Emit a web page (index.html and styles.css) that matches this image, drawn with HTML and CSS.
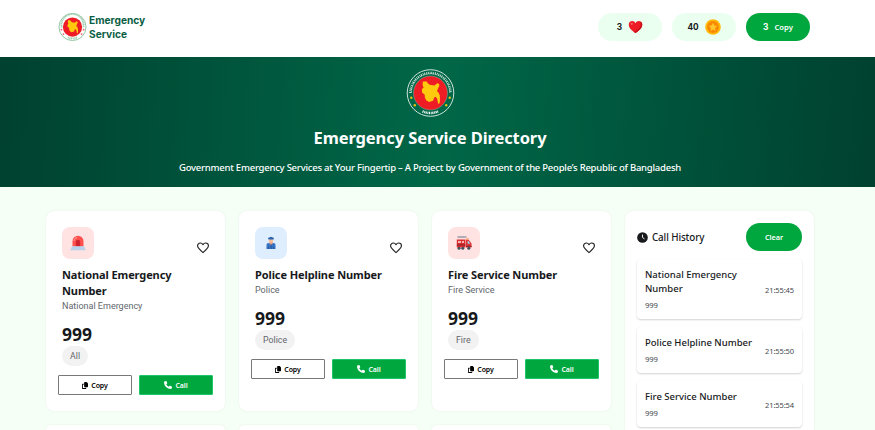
FILE: index.html
```html
<!DOCTYPE html>
<html lang="en">
<head>
<meta charset="utf-8">
<title>Emergency Service Directory</title>
<link rel="stylesheet" href="styles.css">
</head>
<body>
<svg class="defs" width="0" height="0" aria-hidden="true">
  <symbol id="map" viewBox="0 0 48 48">
    <path d="M16.300 12.500h4l.8 1.500 2 1.700 4.900.8 2.600-2.300 2 .6.300 2-2 4.200-.2 1.700 1.300.8 1.300 3 .2 5.500-.7 2.800-1.300-.3-.8-4.800-1.700-2-1.500 1-.8 3-4.200 1.300-2.800-1.700-1.300-2.600-.3-3.300-2.600-2-.1-3.400 1.700-1.300-1-2.800z" fill="#ffc90e"/>
  </symbol>
  <symbol id="heart" viewBox="0 0 16 16">
    <path d="M8 13.300C3.800 9.800 1.800 8 1.800 5.500A3.200 3.200 0 0 1 5 2.300c1.300 0 2.300.7 3 1.900.7-1.200 1.700-1.900 3-1.900a3.200 3.200 0 0 1 3.200 3.200c0 2.500-2 4.300-6.200 7.800z" fill="none" stroke="#202020" stroke-width="1.300" stroke-linejoin="round"/>
  </symbol>
  <symbol id="copy" viewBox="0 0 448 512">
    <path d="M208 0h124c13 0 25 5 34 14l68 68c9 9 14 21 14 34v220c0 27-21 48-48 48H208c-27 0-48-21-48-48V48c0-27 21-48 48-48zM48 128h80v64H64v256h192v-32h64v48c0 27-21 48-48 48H48c-27 0-48-21-48-48V176c0-27 21-48 48-48z"/>
  </symbol>
  <symbol id="phone" viewBox="0 0 512 512">
    <path d="M164.900 24.600c-7.700-18.600-28-28.500-47.400-23.200l-88 24C12.100 30.200 0 46 0 64c0 247.400 200.600 448 448 448 18 0 33.800-12.100 38.600-29.500l24-88c5.300-19.400-4.600-39.700-23.200-47.400l-96-40c-16.300-6.800-35.200-2.100-46.300 11.600L304.700 368C234.300 334.700 177.300 277.700 144 207.300L193.300 167c13.700-11.200 18.400-30 11.600-46.300z" fill="#fff"/>
  </symbol>
</svg>

<header class="navbar">
  <div class="brand">
    <svg class="brand-logo" viewBox="0 0 48 48">
      <circle cx="24" cy="24" r="23.200" fill="#fff" stroke="#83bd96" stroke-width="1.500"/>
      <path d="M5.500 25A19 19 0 1 1 42.500 25M16 41.800A19.500 19.500 0 0 0 32 41.800" fill="none" stroke="#a3cfb0" stroke-width="3.200" stroke-dasharray="2 .8"/>
      <circle cx="24" cy="24" r="16.500" fill="#ee1c25"/>
      <g fill="#ee5b62"><circle cx="5" cy="28.500" r="1.500"/><circle cx="8.500" cy="36" r="1.500"/><circle cx="43" cy="28.500" r="1.500"/><circle cx="39.500" cy="36" r="1.500"/></g>
      <use href="#map"/>
    </svg>
    <div class="brand-name">Emergency<br>Service</div>
  </div>
  <div class="counters">
    <div class="pill"><span>3</span>
      <svg class="pill-heart" viewBox="0 0 16 14"><path d="M8 13.500C3 10 .8 7.500.8 4.300.8 2 2.500.6 4.400.6 6 .6 7.300 1.500 8 3 8.700 1.500 10 .6 11.600.6c1.900 0 3.600 1.400 3.600 3.700 0 3.200-2.200 5.700-7.200 9.200z" fill="#ee1c25"/><path d="M8 13.500c5-3.500 7.200-6 7.200-9.200 0-1.500-.7-2.600-1.700-3.200.5 4.900-1.500 8.400-7.200 11.100z" fill="#c9111d"/><circle cx="4" cy="3.600" r="1.200" fill="#f8656b"/></svg>
    </div>
    <div class="pill"><span>40</span>
      <svg class="pill-coin" viewBox="0 0 16 16"><circle cx="8" cy="8" r="7.800" fill="#ffb90a"/><circle cx="8" cy="8" r="5.900" fill="#f98700"/><path d="M8 3.700l1.300 2.700 3 .4-2.200 2.100.5 3L8 10.500l-2.600 1.400.5-3-2.200-2.100 3-.4z" fill="#ffc72d"/></svg>
    </div>
    <button class="pill pill-green"><span>3</span> <b>Copy</b></button>
  </div>
</header>

<section class="hero">
  <svg class="hero-logo" viewBox="0 0 48 48">
    <circle cx="24" cy="24" r="23.300" fill="#006747" stroke="#e5f1eb" stroke-width=".9"/>
    <path d="M4.800 24A19.200 19.200 0 0 1 43.200 24" fill="none" stroke="#cfe3da" stroke-width=".7" stroke-dasharray="2.600 .5"/>
    <path d="M3.800 24A20.200 20.200 0 0 1 44.200 24" fill="none" stroke="#dcece5" stroke-width="2.200" stroke-dasharray=".9 1.100 .7 .9"/>
    <path d="M16 42.300A20 20 0 0 0 32 42.300" fill="none" stroke="#fff" stroke-width="2.400" stroke-dasharray="1.200 .7 .8 .6"/>
    <circle cx="24" cy="24" r="17" fill="#ee1c25" stroke="#7fb39f" stroke-width=".5"/>
    <g fill="#e6c414"><circle cx="4.800" cy="28.800" r="1.200"/><circle cx="8.300" cy="36.300" r="1.200"/><circle cx="43.200" cy="28.800" r="1.200"/><circle cx="39.700" cy="36.300" r="1.200"/></g>
    <use href="#map"/>
  </svg>
  <h1>Emergency Service Directory</h1>
  <p>Government Emergency Services at Your Fingertip – A Project by Government of the People’s Republic of Bangladesh</p>
</section>

<main class="layout">
  <article class="card">
    <div class="card-top">
      <div class="tile tile-red"><svg viewBox="0 0 16 16"><path d="M2.500 11.500V6.200a5.500 5.500 0 0 1 11 0v5.300z" fill="#ff514e"/><path d="M5.800 11.500V7a2.200 2.200 0 0 1 4.400 0v4.500z" fill="#cf2430"/><path d="M4 6a4 4 0 0 1 3-3.500" fill="none" stroke="#ff8b83" stroke-width="1.200"/><path d="M2 11.300h12l1.600 4H.4z" fill="#b9d1eb"/></svg></div>
      <svg class="fav"><use href="#heart"/></svg>
    </div>
    <h2>National Emergency Number</h2>
    <div class="sub">National Emergency</div>
    <div class="number">999</div>
    <span class="tag">All</span>
    <div class="actions">
      <button class="btn"><svg class="i-copy"><use href="#copy"/></svg>Copy</button>
      <button class="btn btn-call"><svg class="i-phone"><use href="#phone"/></svg>Call</button>
    </div>
  </article>
  <article class="card">
    <div class="card-top">
      <div class="tile tile-blue"><svg viewBox="0 0 16 16"><path d="M3.500 14V9.800Q3.500 8 5.500 8h5q2 0 2 1.800V14z" fill="#3975c4"/><path d="M6.300 7h3.400v1.500L8 10 6.300 8.500z" fill="#e9a17e"/><circle cx="8" cy="5.600" r="2.200" fill="#f6bd9b"/><path d="M5.500 4.600L5 3l3-1.200L11 3l-.5 1.600z" fill="#2763ae"/><path d="M8 9.500V14M5.400 11.500V14m5.200-2.500V14" stroke="#234f8e" stroke-width=".8"/></svg></div>
      <svg class="fav"><use href="#heart"/></svg>
    </div>
    <h2>Police Helpline Number</h2>
    <div class="sub">Police</div>
    <div class="number">999</div>
    <span class="tag">Police</span>
    <div class="actions">
      <button class="btn"><svg class="i-copy"><use href="#copy"/></svg>Copy</button>
      <button class="btn btn-call"><svg class="i-phone"><use href="#phone"/></svg>Call</button>
    </div>
  </article>
  <article class="card">
    <div class="card-top">
      <div class="tile tile-red"><svg viewBox="0 0 16 16"><path d="M1.500 2h9" stroke="#77818e" stroke-width="1.100"/><path d="M.8 4.500h8.700v8H.8z" fill="#dc2b2d"/><path d="M10 4.500h2.500l3 4v4H10z" fill="#e23434"/><path d="M11.600 6h1l1.700 2.700h-2.700z" fill="#8fd0ea"/><path d="M2 6h3v2H2zm4 0h2v2H6z" fill="#f3b7b4"/><path d="M.8 10h8.700M10 11.300h5.700" stroke="#7d2630" stroke-width="1"/><g fill="#44505d"><circle cx="3" cy="13.200" r="1.500"/><circle cx="6.800" cy="13.200" r="1.500"/><circle cx="12.800" cy="13.200" r="1.500"/></g><path d="M10.500 3h2v1.500h-2z" fill="#ffad6b"/></svg></div>
      <svg class="fav"><use href="#heart"/></svg>
    </div>
    <h2>Fire Service Number</h2>
    <div class="sub">Fire Service</div>
    <div class="number">999</div>
    <span class="tag">Fire</span>
    <div class="actions">
      <button class="btn"><svg class="i-copy"><use href="#copy"/></svg>Copy</button>
      <button class="btn btn-call"><svg class="i-phone"><use href="#phone"/></svg>Call</button>
    </div>
  </article>
  <aside class="history">
    <div class="history-head">
      <svg class="clock" viewBox="0 0 12 12"><circle cx="6" cy="6" r="5.800" fill="#17191c"/><path d="M6 2.800V6l2.200 1.500" fill="none" stroke="#fff" stroke-width="1"/></svg>
      <h3>Call History</h3>
      <button class="clear">Clear</button>
    </div>
    <div class="entry"><div><h4>National Emergency Number</h4><p>999</p></div><time>21:55:45</time></div>
    <div class="entry"><div><h4>Police Helpline Number</h4><p>999</p></div><time>21:55:50</time></div>
    <div class="entry"><div><h4>Fire Service Number</h4><p>999</p></div><time>21:55:54</time></div>
  </aside>
  <article class="card"></article>
  <article class="card"></article>
  <article class="card"></article>
</main>
</body>
</html>
```

FILE: styles.css
```css
* { box-sizing: border-box; margin: 0; padding: 0; }
html, body { height: 430px; overflow: hidden; }
body { font-family: "Noto Sans", sans-serif; background: #f5fff6; color: #17191c; }
svg { display: block; flex: none; }
button { font-family: inherit; border: 0; }
.defs { position: absolute; }

.navbar { height: 57px; background: #fff; display: flex; justify-content: space-between; align-items: flex-start; padding: 13px 65px 0 58px; }
.brand { display: flex; gap: 2px; }
.brand-logo { width: 29px; height: 28px; }
.brand-name { font: 700 10.2px/14px Inter, sans-serif; color: #0b5e45; }
.counters { display: flex; gap: 10px; }
.pill { width: 64px; height: 28px; border-radius: 14px; background: #ebfff1; display: flex; align-items: center; justify-content: center; gap: 6px; font: 700 8.3px/14px Inter, sans-serif; color: #17191c; }
.pill-heart { width: 15px; height: 14px; }
.pill-coin { width: 16px; height: 16px; }
.pill-green { background: #00a63e; color: #fff; }
.pill-green b { font: 600 7.7px/14px "Noto Sans", sans-serif; }

.hero { height: 130px; padding: 12px 15px 0 0; display: flex; flex-direction: column; align-items: center; color: #fff; background: linear-gradient(94deg, #00412f 0%, #006747 50%, #00412f 100%); }
.hero-logo { width: 49px; height: 48px; }
.hero h1 { font-size: 16.5px; line-height: 24px; font-weight: 700; margin-top: 9px; letter-spacing: -0.1px; white-space: nowrap; }
.hero p { font-size: 9.5px; line-height: 14px; margin-top: 11px; letter-spacing: -0.235px; white-space: nowrap; font-weight: 500; }

.layout { display: grid; grid-template-columns: repeat(3, 179px) 189px; grid-template-rows: 200px 5px; gap: 14px; width: 772px; height: 243px; padding: 24px 2px 0; margin-left: 44px; overflow: hidden; }
.card, .history { background: #fff; border-radius: 8px; box-shadow: 0 0 2px rgba(0, 0, 0, .08); }
.card { padding: 16px 12px 0; }
.card:empty { border-radius: 8px 8px 0 0; padding: 0; }
.card-top { display: flex; justify-content: space-between; padding: 0 3px 0 4px; }
.tile { width: 32px; height: 32px; border-radius: 8px; display: flex; align-items: center; justify-content: center; }
.tile svg { width: 16px; height: 16px; }
.tile-red { background: #ffe2e2; }
.tile-blue { background: #dfeeff; }
.fav { width: 14px; height: 14px; margin-top: 14px; }
.card h2 { font-size: 11px; line-height: 16px; font-weight: 700; letter-spacing: -0.1px; margin: 8px 4px 0; }
.sub { font: 400 9px/14px Roboto, sans-serif; color: #62666c; margin-left: 4px; }
.number { font-size: 17.5px; line-height: 20px; font-weight: 700; margin: 11px 0 0 4px; }
.tag { display: flex; width: fit-content; align-items: center; height: 20px; padding: 0 8px; border-radius: 10px; background: #f2f2f2; color: #62666c; font: 400 8.8px/20px Roboto, sans-serif; margin: 2px 0 0 4px; }
.actions { display: flex; gap: 7px; margin-top: 9px; }
.btn { width: 74px; height: 20px; display: flex; align-items: center; justify-content: center; gap: 3px; border: 1px solid #77787a; border-radius: 1px; background: #fff; color: #000; font-size: 7px; font-weight: 600; letter-spacing: -0.1px; }
.btn-call { background: #00a63e; border-color: #20c46a; color: #fff; }
.i-copy { width: 6px; height: 7px; }
.i-phone { width: 8px; height: 8px; }

.history { grid-column: 4; grid-row: 1 / 3; padding: 12px; border-radius: 8px 8px 0 0; }
.history-head { display: flex; align-items: center; margin-bottom: 8px; }
.clock { width: 11px; height: 11px; }
.history h3 { font-size: 9.8px; line-height: 16px; font-weight: 500; letter-spacing: -0.1px; margin-left: 4px; padding-top: 1px; flex: 1; }
.clear { width: 56px; height: 28px; border-radius: 14px; background: #00a63e; color: #fff; font-size: 7.2px; font-weight: 600; }
.entry { display: flex; justify-content: space-between; align-items: center; padding: 9px 8px 8px; border-radius: 4px; background: #fff; box-shadow: 0 1px 2px rgba(0, 0, 0, .18); margin-bottom: 8px; }
.entry h4 { font-size: 9.5px; line-height: 14px; font-weight: 500; }
.entry p { font-size: 7.7px; line-height: 12px; margin-top: 3px; letter-spacing: -0.1px; color: #45494f; }
.entry time { font-size: 7.5px; letter-spacing: -0.1px; color: #45494f; }
```
